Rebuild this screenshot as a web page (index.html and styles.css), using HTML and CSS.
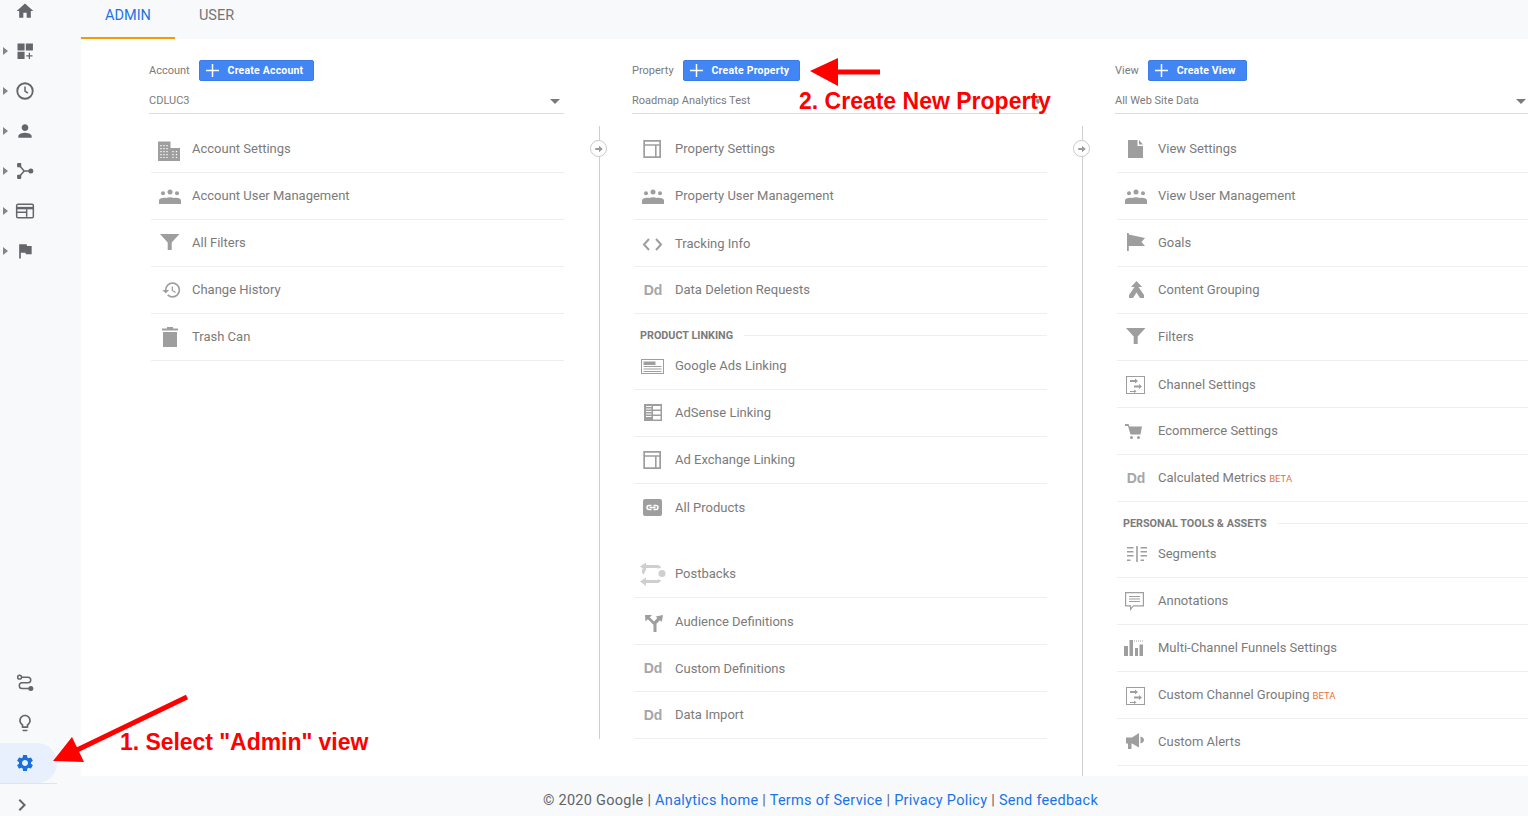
FILE: index.html
```html
<!DOCTYPE html>
<html lang="en">
<head>
<meta charset="utf-8">
<title>Google Analytics Admin</title>
<link rel="stylesheet" href="styles.css">
</head>
<body>
<svg class="defs" width="0" height="0" aria-hidden="true">
  <symbol id="i-people" viewBox="0 0 24 24"><circle cx="5" cy="9.3" r="2"/><circle cx="12" cy="8" r="2.5"/><circle cx="19" cy="9.3" r="2"/><path d="M1 20v-3.5c0-1.8 2.5-2.8 5-2.8.8 0 1.5.1 2.2.3 1-.5 2.4-.8 3.8-.8s2.8.3 3.8.8c.7-.2 1.4-.3 2.2-.3 2.5 0 5 1 5 2.8V20z"/></symbol>
  <symbol id="i-funnel" viewBox="0 0 24 24"><path d="M2 3h19.5l-7.8 8.5V19h-4v-7.500z"/></symbol>
  <symbol id="i-layout" viewBox="0 0 24 24"><path d="M2.300 3h17.700v18H2.300zm1.700 5.800V19.300h10V8.800zm11.600 0V19.300h2.700V8.800zM4 4.700v2.500h14.300V4.700z"/></symbol>
  <symbol id="i-channel" viewBox="0 0 24 24"><path d="M2 4h19v18H2zm1 1v16h17V5z"/><path d="M6 8h5V6.500l3 2.500-3 2.500V10H6zM10 13.500h5V12l3 2.500-3 2.500v-1.500h-5zM6 19h4v-1.500l2.500 2-2.500 1.500V20H6z"/></symbol>
</svg>

<div class="page">
  <aside class="sidebar">
    <nav class="nav-top">
      <a class="nav-item nav-home"><svg viewBox="0 0 24 24"><path d="M10 20v-6h4v6h5v-8h3L12 3 2 12h3v8z"/></svg></a>
      <a class="nav-item"><i class="caret"></i><svg viewBox="0 0 24 24"><path d="M3 3h8.500v8.500H3zm10 0h8.500v8.500H13zM3 13h8.500v8.500H3zm15 1h-1.500v3h-3v1.500h3v3H18v-3h3V17h-3z"/></svg></a>
      <a class="nav-item"><i class="caret"></i><svg viewBox="0 0 24 24"><circle class="line" cx="12" cy="12" r="9.300"/><path class="line thin" d="M12 6.500V12l3.500 2.500"/></svg></a>
      <a class="nav-item"><i class="caret"></i><svg viewBox="0 0 24 24"><path d="M12 12c2.210 0 4-1.790 4-4s-1.790-4-4-4-4 1.790-4 4 1.790 4 4 4zm0 2c-2.670 0-8 1.340-8 4v2h16v-2c0-2.660-5.330-4-8-4z"/></svg></a>
      <a class="nav-item"><i class="caret"></i><svg viewBox="0 0 24 24"><path class="line thin" d="M5 5l6 7h7M5 19l6-7"/><rect x="2.500" y="2.500" width="5" height="5" rx="1"/><rect x="2.500" y="16.500" width="5" height="5" rx="1"/><circle cx="19" cy="12" r="3"/></svg></a>
      <a class="nav-item"><i class="caret"></i><svg viewBox="0 0 24 24"><rect class="line thin" x="2" y="4" width="20" height="16" rx="1.500"/><path d="M2 7h20v3H2z"/><path class="line thin" d="M14 10v9M2 13.500h12"/></svg></a>
      <a class="nav-item"><i class="caret"></i><svg viewBox="0 0 24 24"><path d="M14.400 6L14 4H5v17h2v-7h5.600l.4 2h7V6z"/></svg></a>
    </nav>
    <nav class="nav-bottom">
      <a class="nav-item nav-home"><svg viewBox="0 0 24 24"><circle class="line thin" cx="5.500" cy="5" r="2.300"/><path class="line thin" d="M8 5h7.500a3.300 3.300 0 0 1 0 6.800H8.500a3.300 3.300 0 0 0 0 6.700H17"/><circle cx="19" cy="18.500" r="3"/></svg></a>
      <a class="nav-item nav-home"><svg viewBox="0 0 24 24"><path d="M9 21c0 .550.450 1 1 1h4c.550 0 1-.450 1-1v-1H9v1zm3-19C8.140 2 5 5.140 5 9c0 2.380 1.190 4.470 3 5.740V17c0 .550.450 1 1 1h6c.550 0 1-.450 1-1v-2.260c1.810-1.270 3-3.360 3-5.740 0-3.860-3.140-7-7-7zm2.850 11.100l-.850.600V16h-4v-2.300l-.850-.600A4.997 4.997 0 0 1 7 9c0-2.760 2.240-5 5-5s5 2.240 5 5c0 1.630-.800 3.160-2.150 4.100z"/></svg></a>
      <a class="nav-item nav-home nav-active"><svg viewBox="0 0 24 24"><path d="M19.140 12.940c.040-.300.060-.610.060-.940 0-.320-.020-.640-.070-.940l2.030-1.580a.490.490 0 0 0 .120-.610l-1.920-3.320a.488.488 0 0 0-.590-.220l-2.390.960c-.500-.380-1.030-.700-1.620-.940l-.360-2.540a.484.484 0 0 0-.480-.410h-3.840c-.240 0-.430.170-.470.410l-.360 2.540c-.590.240-1.130.570-1.620.940l-2.390-.960c-.220-.080-.470 0-.590.220L2.740 8.870c-.120.210-.080.470.120.610l2.030 1.580c-.050.300-.090.630-.090.940s.020.640.070.940l-2.030 1.580a.490.490 0 0 0-.120.610l1.920 3.320c.120.220.370.290.590.220l2.390-.960c.500.380 1.030.700 1.620.940l.360 2.540c.050.240.240.410.480.410h3.840c.240 0 .440-.170.470-.410l.360-2.540c.590-.240 1.130-.560 1.620-.940l2.390.960c.220.080.470 0 .590-.220l1.920-3.320c.120-.220.070-.470-.120-.610l-2.010-1.580zM12 15.600c-1.980 0-3.600-1.620-3.600-3.600s1.620-3.600 3.600-3.600 3.600 1.620 3.600 3.600-1.620 3.600-3.600 3.600z"/></svg></a>
      <a class="nav-expand"><svg viewBox="0 0 24 24"><path d="M8.590 16.590 13.170 12 8.590 7.410 10 6l6 6-6 6z"/></svg></a>
    </nav>
  </aside>

  <div class="content">
    <header class="tabs">
      <a class="tab tab-active">ADMIN</a>
      <a class="tab">USER</a>
    </header>

    <main class="admin">
      <section class="col">
        <div class="col-head"><span class="col-label">Account</span><button class="btn"><svg viewBox="0 0 14 14"><path d="M6.200 0h1.600v6.200H14v1.600H7.800V14H6.200V7.800H0V6.200h6.200z"/></svg>Create Account</button></div>
        <div class="select"><span>CDLUC3</span><i class="select-caret"></i></div>
        <ul class="list list-first">
          <li class="row"><span class="ico"><svg viewBox="0 0 24 24"><path d="M0 4.500h12.500v6.500H22v13H0z"/><path class="dots" d="M3 8v13M6 8v13M9 8v13M15 14v7M18.500 14v7"/></svg></span>Account Settings</li>
          <li class="row"><span class="ico"><svg><use href="#i-people"/></svg></span>Account User Management</li>
          <li class="row"><span class="ico"><svg><use href="#i-funnel"/></svg></span>All Filters</li>
          <li class="row"><span class="ico"><svg viewBox="0 0 24 24"><path transform="translate(3.500 1.800) scale(.85)" d="M13 3a9 9 0 0 0-9 9H1l3.890 3.890.070.140L9 12H6c0-3.870 3.130-7 7-7s7 3.130 7 7-3.130 7-7 7c-1.930 0-3.680-.790-4.940-2.060l-1.420 1.420A8.954 8.954 0 0 0 13 21a9 9 0 0 0 0-18zm-1 5v5l4.280 2.540.720-1.210-3.500-2.080V8H12z"/></svg></span>Change History</li>
          <li class="row"><span class="ico"><svg viewBox="0 0 24 24"><path d="M9 2h6v1.500h5v2H4v-2h5zM5 7h14v15H5z"/></svg></span>Trash Can</li>
        </ul>
      </section>

      <section class="col">
        <div class="col-head"><span class="col-label">Property</span><button class="btn"><svg viewBox="0 0 14 14"><path d="M6.200 0h1.600v6.200H14v1.600H7.800V14H6.200V7.800H0V6.200h6.200z"/></svg>Create Property</button></div>
        <div class="select"><span>Roadmap Analytics Test</span><i class="select-caret"></i></div>
        <ul class="list list-linked">
          <li class="connector"><span class="connector-dot"><svg viewBox="0 0 12 12"><path d="M1.500 4.700h4.500V2l4.500 4-4.500 4V7.300H1.500z"/></svg></span></li>
          <li class="row"><span class="ico"><svg><use href="#i-layout"/></svg></span>Property Settings</li>
          <li class="row"><span class="ico"><svg><use href="#i-people"/></svg></span>Property User Management</li>
          <li class="row row-low"><span class="ico"><svg viewBox="0 0 24 24"><path class="code" d="M8 8l-5 5.500 5 5.500M15 8l5 5.500-5 5.500"/></svg></span>Tracking Info</li>
          <li class="row"><span class="ico"><b class="dd">Dd</b></span>Data Deletion Requests</li>
          <li class="section"><span>PRODUCT LINKING</span></li>
          <li class="row"><span class="ico"><svg viewBox="0 0 24 24"><path d="M0 5h23v15H0zm1 1v13h21V6z"/><path d="M2.500 7.500h12v3.500h-12zM2.500 12h18v1h-18zM2.500 14.500h18v1h-18zM2.500 17h18v1h-18z"/></svg></span>Google Ads Linking</li>
          <li class="row"><span class="ico"><svg viewBox="0 0 24 24"><path d="M3 3h18v17H3z"/><path class="white" d="M5 5h5.500v1H5zM5 7.500h5.500v1H5zM5 10h5.500v1H5zM5 12.500h5.500v1H5zM5 15h5.500v1H5zM12 5h7.500v3.500H12zM12 10h7.500v3.500H12zM12 15h7.500v3.500H12z"/></svg></span>AdSense Linking</li>
          <li class="row"><span class="ico"><svg><use href="#i-layout"/></svg></span>Ad Exchange Linking</li>
          <li class="row row-plain row-low"><span class="ico"><svg viewBox="0 0 24 24"><rect x="2" y="4" width="19" height="17" rx="2"/><path class="link" d="M10.500 10.500H8a2 2 0 0 0 0 4h2.500M12.500 10.500H15a2 2 0 0 1 0 4h-2.500M8.500 12.500h6"/></svg></span>All Products</li>
          <li class="row row-spaced"><span class="ico"><svg class="light" viewBox="0 0 24 24"><path d="M-1 4.500 5 .5v2.500h11c2.500 0 3.500 1.200 4 3l-3.500.5c-.3-.5-.8-.5-1.500-.5H5V9zM-1 19.500 5 15.500V18h10c.7 0 1.200 0 1.500-.5l3.500.5c-.5 1.800-1.500 3-4 3H5v3z"/><circle cx="21" cy="11.500" r="3.500"/><path d="M1 7 4.500 8 3 12.500 1 11z"/></svg></span>Postbacks</li>
          <li class="row row-low"><span class="ico"><svg viewBox="0 0 24 24"><path d="M4 6h7l-2.200 2.200 4.200 4.200 3.300-3.300-1.600-1.600L22 6l-1.300 7-1.700-1.700-3.500 3.500V23h-3v-7.200L6.800 10.200 4.500 12.500z"/></svg></span>Audience Definitions</li>
          <li class="row row-low"><span class="ico"><b class="dd">Dd</b></span>Custom Definitions</li>
          <li class="row"><span class="ico"><b class="dd">Dd</b></span>Data Import</li>
        </ul>
      </section>

      <section class="col">
        <div class="col-head"><span class="col-label">View</span><button class="btn"><svg viewBox="0 0 14 14"><path d="M6.200 0h1.600v6.200H14v1.600H7.800V14H6.200V7.800H0V6.200h6.200z"/></svg>Create View</button></div>
        <div class="select"><span>All Web Site Data</span><i class="select-caret"></i></div>
        <ul class="list list-linked list-last">
          <li class="connector"><span class="connector-dot"><svg viewBox="0 0 12 12"><path d="M1.500 4.700h4.500V2l4.500 4-4.500 4V7.300H1.500z"/></svg></span></li>
          <li class="row"><span class="ico"><svg viewBox="0 0 24 24"><path d="M4 3h9.500v6H19v12H4zM15 3l4 4.500h-4z"/></svg></span>View Settings</li>
          <li class="row"><span class="ico"><svg><use href="#i-people"/></svg></span>View User Management</li>
          <li class="row"><span class="ico"><svg viewBox="0 0 24 24"><path d="M3 2h1.800v1.500L21 7l-3.500 4 3.500 4H4.800v5H3z"/></svg></span>Goals</li>
          <li class="row"><span class="ico"><svg viewBox="0 0 24 24"><path d="M12.500 3 18 9h-3.500L20 17v3h-4l-3.500-5.500L9 20H5v-3l5.500-8H7z"/></svg></span>Content Grouping</li>
          <li class="row"><span class="ico"><svg><use href="#i-funnel"/></svg></span>Filters</li>
          <li class="row row-low"><span class="ico"><svg><use href="#i-channel"/></svg></span>Channel Settings</li>
          <li class="row"><span class="ico"><svg viewBox="0 0 24 24"><path d="M1 5h3.500l1 2.500H18l-1.500 8H6.500L4 7H1z"/><circle cx="7.500" cy="18.500" r="1.500"/><circle cx="14.500" cy="18.500" r="1.500"/></svg></span>Ecommerce Settings</li>
          <li class="row"><span class="ico"><b class="dd">Dd</b></span>Calculated Metrics<em class="beta">BETA</em></li>
          <li class="section"><span>PERSONAL TOOLS &amp; ASSETS</span></li>
          <li class="row"><span class="ico"><svg viewBox="0 0 24 24"><path d="M12.200 4h1.600v16h-1.600zM3 5h6.500v1.500H3zM3 9h6.500v1.500H3zM3 13h6.500v1.500H3zM3 17.500h3.500V19H3zM16.500 5H23v1.500h-6.500zM16.500 9H23v1.500h-6.500zM16.500 13H23v1.500h-6.500zM16.500 17.500H20V19h-3.500z"/></svg></span>Segments</li>
          <li class="row"><span class="ico"><svg viewBox="0 0 24 24"><path d="M1 3h19v14.500H9.500L6 22v-4.500H1zm1.200 1.200v12.100H7.200v2.500l2-2.500h9.600V4.200z"/><path d="M5 7h11v1H5zM5 9.500h11v1H5zM5 12h11v1H5z"/></svg></span>Annotations</li>
          <li class="row"><span class="ico"><svg viewBox="0 0 24 24"><path d="M0 10h4v10H0zM5.500 4h3.500v16H5.500zM11 12h3v8h-3zM15.500 8.500H19V20h-3.500z"/><path class="dotline" d="M10 5h9"/></svg></span>Multi-Channel Funnels Settings</li>
          <li class="row"><span class="ico"><svg><use href="#i-channel"/></svg></span>Custom Channel Grouping<em class="beta">BETA</em></li>
          <li class="row"><span class="ico"><svg viewBox="0 0 24 24"><path d="M2 7.500h6L15 3v14.500L8 13.500H7.500V19H4v-5.500H2zM16.500 6.500c2 .5 3.500 1.700 3.500 3.500s-1.500 3-3.500 3.500z"/></svg></span>Custom Alerts</li>
        </ul>
      </section>
    </main>

    <footer class="footer">© 2020 Google | <a>Analytics home</a> | <a>Terms of Service</a> | <a>Privacy Policy</a> | <a>Send feedback</a></footer>
  </div>
</div>

<svg class="marks" viewBox="0 0 1528 816" aria-hidden="true">
  <path class="mark-line" d="M187 697 77 750"/>
  <path class="mark-head" d="M53 761 72 737 84 762z"/>
  <path class="mark-line" d="M880 72H830"/>
  <path class="mark-head" d="M810 71 838 58V86z"/>
</svg>
<span class="note note-one">1. Select "Admin" view</span>
<span class="note note-two">2. Create New Property</span>
</body>
</html>
```

FILE: styles.css
```css
* { box-sizing: border-box; }

html, body {
  margin: 0;
  height: 100%;
  overflow: hidden;
}

body {
  position: relative;
  background: #f8f9fb;
  color: #7b7b7b;
  font-family: Roboto, "Liberation Sans", sans-serif;
}

.defs { position: absolute; }

.page {
  display: flex;
  height: 816px;
}

/* Sidebar */
.sidebar {
  flex: 0 0 81px;
  display: flex;
  flex-direction: column;
  justify-content: space-between;
  height: 816px;
}

.nav-top { margin-top: -9px; }

.nav-item {
  display: flex;
  align-items: center;
  height: 40px;
  width: 57px;
  padding-left: 3px;
  color: #63676b;
}

.nav-item svg {
  width: 20px;
  height: 20px;
  margin-left: 7px;
  fill: currentColor;
}

.nav-home { padding-left: 8px; }

.caret {
  width: 0;
  height: 0;
  margin-right: 0;
  border-left: 5px solid #80868b;
  border-top: 4px solid transparent;
  border-bottom: 4px solid transparent;
}

.line {
  fill: none;
  stroke: currentColor;
  stroke-width: 2.2;
}

.thin { stroke-width: 1.800; }

.nav-active {
  color: #1a6fdc;
  background: #e8f0fe;
  border-radius: 0 20px 20px 0;
}

.nav-expand {
  display: flex;
  align-items: center;
  width: 57px;
  height: 33px;
  padding: 10px 0 0 10px;
  border-top: 1px solid #e2e4e7;
  color: #63676b;
}

.nav-expand svg {
  width: 24px;
  height: 24px;
  fill: currentColor;
}

/* Content */
.content {
  flex: 1;
  min-width: 0;
  display: flex;
  flex-direction: column;
}

.tabs {
  display: flex;
  flex: 0 0 39px;
}

.tab {
  display: flex;
  align-items: center;
  height: 39px;
  padding: 0 24px 9px;
  font-size: 14.500px;
  color: #757575;
}

.tab-active {
  color: #1a73e8;
  border-bottom: 2px solid #f59a00;
  padding-bottom: 7px;
}

.admin {
  flex: 0 0 737px;
  display: grid;
  grid-template-columns: 415px 415px 415px;
  column-gap: 68px;
  padding: 21px 0 0 68px;
  background: #fff;
  overflow: hidden;
}

.col { min-width: 0; }

.col-head {
  display: flex;
  align-items: center;
  height: 21px;
  gap: 9.400px;
}

.col-label { font-size: 11px; }

.btn {
  display: flex;
  align-items: center;
  height: 21px;
  padding: 0 10px 0 6px;
  background: #4285f4;
  border: 1px solid #3b7de8;
  border-radius: 2px;
  color: #fff;
  font: 700 10.500px Roboto, sans-serif;
  letter-spacing: .2px;
}

.btn svg {
  width: 13px;
  height: 13px;
  margin-right: 8.500px;
  fill: #fff;
}

.select {
  display: flex;
  align-items: center;
  justify-content: space-between;
  height: 27px;
  margin-top: 6px;
  padding: 0 4px 0 0;
  border-bottom: 1px solid #dcdcdc;
  font-size: 11px;
}

.select-caret {
  width: 0;
  height: 0;
  margin-top: 2px;
  border-top: 5px solid #7b7b7b;
  border-left: 5px solid transparent;
  border-right: 5px solid transparent;
}

.list {
  list-style: none;
  margin: 12px 0 0;
  padding: 0;
}

.list-first { margin-left: 2px; }

.list-linked {
  position: relative;
  margin-left: -33px;
  padding-left: 34px;
  border-left: 1px solid #cfcfcf;
}

.list-last { padding-bottom: 20px; }

.connector {
  position: absolute;
  left: -10px;
  top: 14px;
}

.connector-dot {
  display: flex;
  align-items: center;
  justify-content: center;
  width: 17px;
  height: 17px;
  background: #fff;
  border: 1px solid #c9c9c9;
  border-radius: 50%;
}

.connector-dot svg {
  width: 10px;
  height: 10px;
  fill: #9a9a9a;
}

.row {
  display: flex;
  align-items: center;
  height: 47px;
  padding-bottom: 2px;
  border-bottom: 1px solid #eeeeee;
  font-size: 13px;
  white-space: nowrap;
}

.row-low { padding-bottom: 0; }
.row-plain { border-bottom-color: transparent; }
.row-spaced { margin-top: 20px; }

.ico {
  flex: 0 0 38px;
  display: flex;
  align-items: center;
  justify-content: center;
  margin-right: 3px;
  margin-top: 2px;
  color: #9e9e9e;
}

.row-low .ico { margin-top: 0; }

.ico svg {
  width: 24px;
  height: 24px;
  overflow: visible;
  fill: currentColor;
}

.ico .light { color: #cfcfcf; }

.dots {
  fill: none;
  stroke: #fff;
  stroke-width: 1.300;
  stroke-dasharray: 1.300 1.700;
}

.white { fill: #fff; }

.code {
  fill: none;
  stroke: currentColor;
  stroke-width: 2;
}

.link {
  fill: none;
  stroke: #fff;
  stroke-width: 1.500;
}

.dotline {
  fill: none;
  stroke: currentColor;
  stroke-width: 1;
  stroke-dasharray: 1 1;
}

.dd {
  font: 700 14px "Liberation Sans", sans-serif;
  color: #a6a6a6;
}

.beta {
  margin: 2px 0 0 3px;
  font-size: 9.500px;
  font-style: normal;
  color: #e5733a;
}

.section {
  display: flex;
  align-items: center;
  gap: 11px;
  height: 29px;
  padding: 14px 0 0 6px;
  font-size: 10.800px;
  font-weight: 700;
  white-space: nowrap;
}

.section::after {
  content: "";
  flex: 1;
  height: 1px;
  background: #eeeeee;
}

.footer {
  flex: 1;
  padding: 16px 0 0 32px;
  text-align: center;
  font-size: 14.500px;
  letter-spacing: .28px;
  color: #5f6368;
}

.footer a { color: #1a73e8; }

/* Annotations drawn over the page */
.marks {
  position: absolute;
  inset: 0;
  width: 1528px;
  height: 816px;
  pointer-events: none;
}

.mark-line {
  fill: none;
  stroke: #fe0000;
  stroke-width: 5;
}

.mark-head { fill: #fe0000; }

.note {
  position: absolute;
  font: 700 23px "Liberation Sans", sans-serif;
  color: #fe0000;
  white-space: nowrap;
}

.note-one { left: 120px; top: 729px; letter-spacing: -.05px; }
.note-two { left: 799px; top: 88px; text-shadow: 0 0 2px #fff, 0 0 2px #fff; }
```
